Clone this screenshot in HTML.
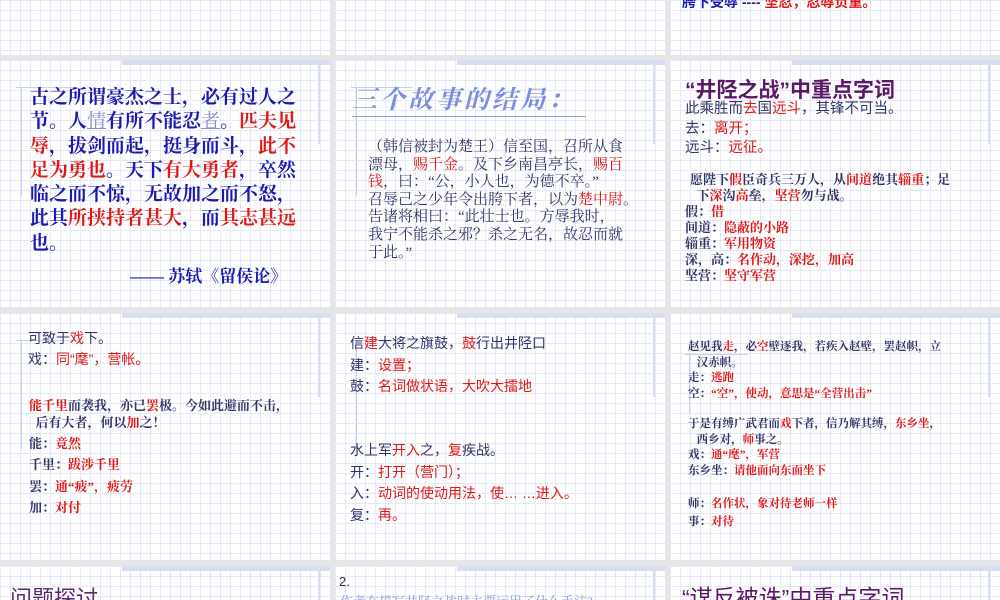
<!DOCTYPE html>
<html><head><meta charset="utf-8"><style>
*{margin:0;padding:0;box-sizing:border-box}
html,body{width:1000px;height:600px;overflow:hidden}
body{background:#e6e6e9;position:relative;font-family:"Liberation Serif","Noto Serif CJK SC",serif}
.s{position:absolute;overflow:hidden;background-color:#fff;
background-image:linear-gradient(#e6eaf7 1px,transparent 1px),linear-gradient(90deg,#e6eaf7 1px,transparent 1px);background-size:10px 10px}
.s .tb{position:absolute;top:0;left:122px;right:0;height:5px;background:#d8dff4}
.s .vr{position:absolute;top:0;left:318px;width:2px;height:84px;background:#d8def2}
.s .vl{position:absolute;top:28px;left:21px;width:1px;height:108px;background:#c8d0ea}
.s .hl{position:absolute;top:27px;left:16px;width:62px;height:1px;background:#c8d0ea}
.t{position:absolute;white-space:nowrap}
.r{color:#e01818}
.b{color:#1a1ab0}
.g{color:#33336a}
</style></head><body>
<!-- row1 -->
<div class="s" style="left:0;top:-190px;width:330px;height:245px"></div>
<div class="s" style="left:335px;top:-190px;width:330px;height:245px"></div>
<div class="s" style="left:670px;top:-190px;width:330px;height:245px">
<div class="t" style="left:12px;top:182px;font-size:14px;font-weight:bold;color:#1a1ab0;font-family:'Liberation Sans','Noto Sans CJK SC',sans-serif">胯下受辱 ---- <span class="r">坚忍，忍辱负重。</span></div></div>

<!-- row2 -->
<div class="s" style="left:0;top:60px;width:330px;height:247px">
<div class="tb"></div><div class="vr"></div><div class="vl"></div><div class="hl"></div>
<div class="t b" style="left:30px;top:26px;font-size:19px;line-height:24.3px;font-weight:bold">古之所谓豪杰之士，必有过人之<br>节。人<span style="color:#8890c8;font-weight:normal;text-decoration:underline">情</span>有所不能忍<span style="color:#8890c8;font-weight:normal;text-decoration:underline">者</span>。<span class="r">匹夫见</span><br><span class="r">辱</span>，拔剑而起，挺身而斗，<span class="r">此不</span><br><span class="r">足为勇也</span>。天下<span class="r">有大勇者</span>，卒然<br>临之而不惊，无故加之而不怒，<br>此其<span class="r">所挟持者甚大</span>，而<span class="r">其志甚远</span><br>也。</div>
<div class="t b" style="left:130px;top:202px;font-size:17px;font-weight:bold">—— 苏轼《留侯论》</div>
</div>
<div class="s" style="left:335px;top:60px;width:330px;height:247px">
<div class="tb"></div><div class="vr"></div><div class="vl"></div><div class="hl"></div>
<div class="t" style="left:17px;top:20px;font-size:25px;font-style:italic;font-weight:bold;color:#7b8ee0;letter-spacing:3px;border-bottom:1px solid #8fa0e0;padding-right:10px">三个故事的结局：</div>
<div class="t g" style="left:33px;top:79px;font-size:15px;line-height:17.6px">（韩信被封为楚王）信至国，召所从食<br>漂母，<span class="r">赐千金</span>。及下乡南昌亭长，<span class="r">赐百</span><br><span class="r">钱</span>，曰：“公，小人也，为德不卒。”<br>召辱己之少年令出胯下者，以为<span class="r">楚中尉</span>。<br>告诸将相曰：“此壮士也。方辱我时，<br>我宁不能杀之邪？杀之无名，故忍而就<br>于此。”</div>
</div>
<div class="s" style="left:670px;top:60px;width:330px;height:247px">
<div class="tb"></div><div class="vr"></div>
<div class="t" style="left:15px;top:14px;font-size:21px;font-weight:bold;color:#5a1868;font-family:'Liberation Sans','Noto Sans CJK SC',sans-serif">“井陉之战”中重点字词</div>
<div class="t g" style="left:15px;top:40px;font-size:14.5px;line-height:19.5px;font-family:'Liberation Sans','Noto Sans CJK SC',sans-serif">此乘胜而<span class="r">去</span>国<span class="r">远斗</span>，其锋不可当。<br>去：<span class="r">离开；</span><br>远斗：<span class="r">远征。</span></div>
<div class="t g" style="left:20px;top:112px;font-size:13px;line-height:16px;font-weight:bold">愿陛下<span class="r">假</span>臣奇兵三万人，从<span class="r">间道</span>绝其<span class="r">辎重</span>；足<br>&nbsp;&nbsp;下<span class="r">深</span>沟<span class="r">高</span>垒，<span class="r">坚营</span>勿与战。</div>
<div class="t g" style="left:15px;top:144px;font-size:13px;line-height:16px;font-weight:bold">假：<span class="r">借</span><br>间道：<span class="r">隐蔽的小路</span><br>辎重：<span class="r">军用物资</span><br>深，高：<span class="r">名作动，深挖，加高</span><br>坚营：<span class="r">坚守军营</span></div>
</div>

<!-- row3 -->
<div class="s" style="left:0;top:313px;width:330px;height:247px">
<div class="tb"></div><div class="vr"></div><div class="vl"></div><div class="hl"></div>
<div class="t g" style="left:28px;top:15px;font-size:14px;line-height:21px;font-family:'Liberation Sans','Noto Sans CJK SC',sans-serif">可致于<span class="r">戏</span>下。<br>戏：<span class="r">同“麾”，营帐。</span></div>
<div class="t g" style="left:29px;top:84px;font-size:13px;line-height:17px;font-weight:bold"><span class="r">能千里</span>而袭我，亦已<span class="r">罢</span>极。今如此避而不击，<br>&nbsp;&nbsp;后有大者，何以<span class="r">加</span>之！</div>
<div class="t g" style="left:29px;top:120px;font-size:13px;line-height:21.3px;font-weight:bold">能：<span class="r">竟然</span><br>千里：<span class="r">跋涉千里</span><br>罢：<span class="r">通“疲”，疲劳</span><br>加：<span class="r">对付</span></div>
</div>
<div class="s" style="left:335px;top:313px;width:330px;height:247px">
<div class="tb"></div><div class="vr"></div><div class="vl"></div><div class="hl"></div>
<div class="t g" style="left:15px;top:20px;font-size:14px;line-height:21.5px;font-family:'Liberation Sans','Noto Sans CJK SC',sans-serif">信<span class="r">建</span>大将之旗鼓，<span class="r">鼓</span>行出井陉口<br>建：<span class="r">设置；</span><br>鼓：<span class="r">名词做状语，大吹大擂地</span></div>
<div class="t g" style="left:15px;top:127px;font-size:14px;line-height:21.5px;font-family:'Liberation Sans','Noto Sans CJK SC',sans-serif">水上军<span class="r">开入</span>之，<span class="r">复</span>疾战。<br>开：<span class="r">打开（营门）；</span><br>入：<span class="r">动词的使动用法，使… …进入。</span><br>复：<span class="r">再。</span></div>
</div>
<div class="s" style="left:670px;top:313px;width:330px;height:247px">
<div class="tb"></div><div class="vr"></div><div class="vl" style="left:19px;top:40px;height:60px"></div><div class="hl" style="top:41px;left:15px"></div>
<div class="t g" style="left:18px;top:27px;font-size:11.5px;line-height:15.5px;font-weight:bold">赵见我<span class="r">走</span>，必<span class="r">空</span>壁逐我，若疾入赵壁，罢赵帜，立<br>&nbsp;&nbsp;&nbsp;汉赤帜。<br>走：<span class="r">逃跑</span><br>空：<span class="r">“空”，使动，意思是“全营出击”</span></div>
<div class="t g" style="left:18px;top:104px;font-size:11.5px;line-height:15.5px;font-weight:bold">于是有缚广武君而<span class="r">戏</span>下者，信乃解其缚，<span class="r">东乡坐</span>，<br>&nbsp;&nbsp;&nbsp;西乡对，<span class="r">师</span>事之。<br>戏：<span class="r">通“麾”，军营</span><br>东乡坐：<span class="r">请他面向东面坐下</span></div>
<div class="t g" style="left:18px;top:182px;font-size:11.5px;line-height:18px;font-weight:bold">师：<span class="r">名作状，象对待老师一样</span><br>事：<span class="r">对待</span></div>
</div>

<!-- row4 -->
<div class="s" style="left:0;top:566px;width:330px;height:34px">
<div class="tb"></div><div class="vr"></div>
<div class="t" style="left:10px;top:15px;font-size:22px;color:#5a2a6a;font-family:'Liberation Sans','Noto Sans CJK SC',sans-serif">问题探讨</div></div>
<div class="s" style="left:335px;top:566px;width:330px;height:34px">
<div class="tb"></div><div class="vr"></div>
<div class="t" style="left:4px;top:8px;font-size:13px;color:#333;font-family:'Liberation Sans',sans-serif">2.</div>
<div class="t" style="left:5px;top:25px;font-size:13px;color:#8a9ad8">作者在描写井陉之战时主要运用了什么手法?</div></div>
<div class="s" style="left:670px;top:566px;width:330px;height:34px">
<div class="tb"></div><div class="vr"></div>
<div class="t" style="left:12px;top:13px;font-size:23px;color:#5a1868;font-family:'Liberation Sans','Noto Sans CJK SC',sans-serif">“谋反被诛”中重点字词</div></div>
</body></html>
